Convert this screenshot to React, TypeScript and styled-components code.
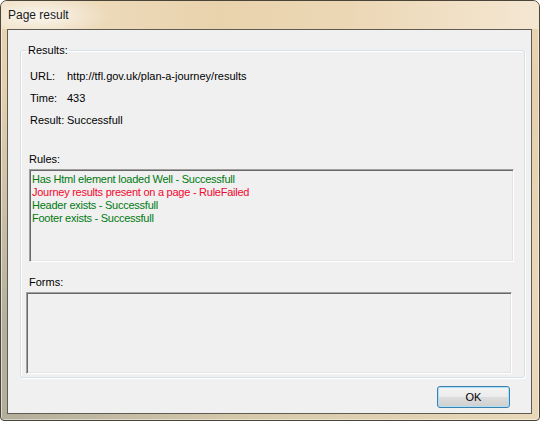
import React from "react";
import styled, { createGlobalStyle } from "styled-components";

const Global = createGlobalStyle`
  html, body { margin: 0; padding: 0; background: #ffffff; }
  body { font-family: "Liberation Sans", Arial, sans-serif; font-size: 11px; color: #000; }
  * { box-sizing: border-box; }
`;

const Window = styled.div`
  width: 540px;
  height: 421px;
  display: flex;
  flex-direction: column;
  border: 1px solid #4a4538;
  border-radius: 7px 7px 4px 4px;
  padding: 0 7px 6px 6px;
  background:
    linear-gradient(180deg, #e9d5b2 0px, #e4d0ae 90px, rgba(228, 208, 174, 0) 330px),
    linear-gradient(90deg, #b2ae9c 0%, #d6c9ab 45%, #e9d8ba 100%);
  box-shadow: inset 1px 1px 0 rgba(255, 255, 255, 0.55), inset -1px -1px 0 rgba(255, 255, 255, 0.45);
`;

const TitleBar = styled.div`
  height: 28px;
  display: flex;
  align-items: center;
  padding: 0 0 1px 7px;
  margin: 0 -7px 0 -6px;
  border-radius: 6px 6px 0 0;
  background:
    radial-gradient(ellipse 70px 22px at 40px 15px, rgba(255, 255, 255, 0.7), rgba(255, 255, 255, 0) 100%),
    linear-gradient(90deg, #efdfc3 0%, #e9d3ad 40%, #ecd7b5 65%, #f4e7d2 100%);
`;

const Title = styled.span`
  font-family: "Liberation Sans", Arial, sans-serif;
  font-size: 12px;
  color: #1a1a1a;
  text-shadow: 0 0 6px rgba(255, 255, 255, 0.9);
`;

const Client = styled.div`
  flex: 1;
  display: flex;
  flex-direction: column;
  border: 1px solid #5f5b52;
  background: #f0f0f0;
`;

const GroupBox = styled.fieldset`
  margin: 14px 6px 0 12px;
  padding: 0 0 3px 0;
  border: 1px solid #d5dfe5;
  border-radius: 3px;
  box-shadow: inset 1px 1px 0 #ffffff, 1px 1px 0 #ffffff;
  min-width: 0;
`;

const Legend = styled.legend`
  margin-left: 6px;
  padding: 0 1px;
  line-height: 13px;
  font-size: 11px;
`;

const InfoGrid = styled.div`
  display: grid;
  grid-template-columns: 37px 1fr;
  grid-auto-rows: 22px;
  align-items: center;
  margin: 8px 0 0 9px;
`;

const InfoLabel = styled.span`
  line-height: 13px;
`;

const InfoValue = styled.span`
  line-height: 13px;
`;

const SectionLabel = styled.div<{ $top: number }>`
  margin: ${(p) => p.$top}px 0 0 8px;
  line-height: 13px;
`;

const ListBox = styled.div<{ $left: number; $width: number; $height: number }>`
  margin: 3px 0 0 ${(p) => p.$left}px;
  width: ${(p) => p.$width}px;
  height: ${(p) => p.$height}px;
  padding: 3px 2px 1px;
  background: #f0f0f0;
  border: 1px solid;
  border-color: #a0a0a0 #ffffff #ffffff #a0a0a0;
  box-shadow: inset 1px 1px 0 #696969, inset -1px -1px 0 #e3e3e3;
`;

const RuleItem = styled.div<{ $ok: boolean }>`
  line-height: 13px;
  letter-spacing: -0.25px;
  color: ${(p) => (p.$ok ? "#007a10" : "#f2072f")};
  white-space: nowrap;
`;

const ButtonRow = styled.div`
  display: flex;
  justify-content: flex-end;
  padding: 8px 21px 0 0;
`;

const OkButton = styled.button`
  width: 73px;
  height: 22px;
  padding: 0;
  font-family: "Liberation Sans", Arial, sans-serif;
  font-size: 11px;
  color: #000;
  border: 1px solid #3c7fb1;
  border-radius: 3px;
  background: linear-gradient(180deg, #f4f4f4 0%, #ebebeb 48%, #dddddd 52%, #cfcfcf 100%);
  box-shadow: inset 0 0 0 1px #a9e2f7;
`;

const rules = [
  { text: "Has Html element loaded Well - Successfull", ok: true },
  { text: "Journey results present on a page - RuleFailed", ok: false },
  { text: "Header exists - Successfull", ok: true },
  { text: "Footer exists - Successfull", ok: true },
];

export default function App() {
  return (
    <>
      <Global />
      <Window>
        <TitleBar>
          <Title>Page result</Title>
        </TitleBar>
        <Client>
          <GroupBox>
            <Legend>Results:</Legend>
            <InfoGrid>
              <InfoLabel>URL:</InfoLabel>
              <InfoValue>http://tfl.gov.uk/plan-a-journey/results</InfoValue>
              <InfoLabel>Time:</InfoLabel>
              <InfoValue>433</InfoValue>
              <InfoLabel>Result:</InfoLabel>
              <InfoValue>Successfull</InfoValue>
            </InfoGrid>
            <SectionLabel $top={22}>Rules:</SectionLabel>
            <ListBox $left={8} $width={485} $height={93}>
              {rules.map((r) => (
                <RuleItem key={r.text} $ok={r.ok}>
                  {r.text}
                </RuleItem>
              ))}
            </ListBox>
            <SectionLabel $top={14}>Forms:</SectionLabel>
            <ListBox $left={5} $width={486} $height={82} />
          </GroupBox>
          <ButtonRow>
            <OkButton>OK</OkButton>
          </ButtonRow>
        </Client>
      </Window>
    </>
  );
}
